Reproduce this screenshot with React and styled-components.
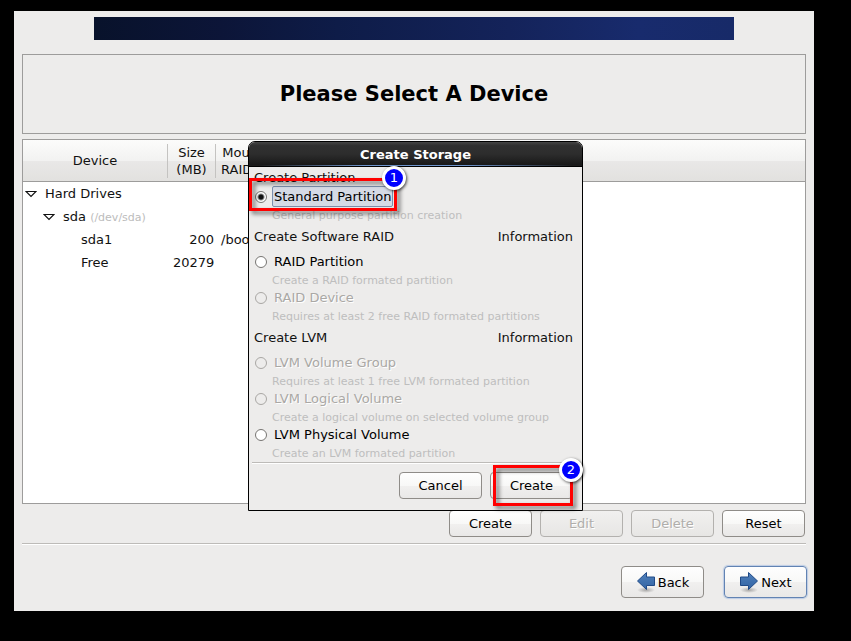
import React, { useState } from 'react';
import styled, { createGlobalStyle, css } from 'styled-components';

const GROUPS = [
  {
    title: 'Create Partition',
    options: [
      {
        id: 'standard',
        label: 'Standard Partition',
        hint: 'General purpose partition creation',
      },
    ],
  },
  {
    title: 'Create Software RAID',
    info: true,
    options: [
      {
        id: 'raid-part',
        label: 'RAID Partition',
        hint: 'Create a RAID formated partition',
      },
      {
        id: 'raid-dev',
        label: 'RAID Device',
        hint: 'Requires at least 2 free RAID formated partitions',
        disabled: true,
      },
    ],
  },
  {
    title: 'Create LVM',
    info: true,
    options: [
      {
        id: 'lvm-group',
        label: 'LVM Volume Group',
        hint: 'Requires at least 1 free LVM formated partition',
        disabled: true,
      },
      {
        id: 'lvm-logical',
        label: 'LVM Logical Volume',
        hint: 'Create a logical volume on selected volume group',
        disabled: true,
      },
      {
        id: 'lvm-physical',
        label: 'LVM Physical Volume',
        hint: 'Create an LVM formated partition',
      },
    ],
  },
];

function Expander() {
  return (
    <svg width="12" height="8" viewBox="0 0 12 8">
      <path d="M1 1.5H11L6 6.5Z" fill="#fff" stroke="#111" strokeWidth="1.2" />
    </svg>
  );
}

function Arrow({ flip }) {
  return (
    <svg width="20" height="22" viewBox="0 0 20 22">
      <defs>
        <linearGradient id="arrowFill" x1="0" y1="0" x2="0" y2="1">
          <stop offset="0" stopColor="#5080bc" />
          <stop offset="0.5" stopColor="#4172af" />
          <stop offset="1" stopColor="#3465a4" />
        </linearGradient>
        <radialGradient id="arrowShade">
          <stop offset="0" stopColor="#000" stopOpacity="0.3" />
          <stop offset="1" stopColor="#000" stopOpacity="0" />
        </radialGradient>
      </defs>
      <ellipse cx="10" cy="19" rx="9" ry="3" fill="url(#arrowShade)" />
      <path
        d="M1.5 6H9.5V1.5L18.5 10L9.5 18.5V14.5H1.5Z"
        transform={flip ? 'translate(20 0) scale(-1 1)' : undefined}
        fill="url(#arrowFill)"
        stroke="#204a87"
      />
    </svg>
  );
}

function DeviceTable() {
  return (
    <Table>
      <colgroup>
        <col width="145" />
        <col width="48" />
        <col />
      </colgroup>
      <thead>
        <tr>
          <HeadCell>
            <HeadLabel $divider>Device</HeadLabel>
          </HeadCell>
          <HeadCell>
            <HeadLabel $divider>
              Size
              <br />
              (MB)
            </HeadLabel>
          </HeadCell>
          <HeadCell>
            <HeadLabel $left>
              Mount Point/
              <br />
              RAID/Volume
            </HeadLabel>
          </HeadCell>
        </tr>
      </thead>
      <tbody>
        <tr>
          <Cell>
            <Node $level={0}>
              <Expander />
              Hard Drives
            </Node>
          </Cell>
          <Cell />
          <Cell />
        </tr>
        <tr>
          <Cell>
            <Node $level={1}>
              <Expander />
              <span>
                sda <Path>(/dev/sda)</Path>
              </span>
            </Node>
          </Cell>
          <Cell />
          <Cell />
        </tr>
        <tr>
          <Cell>
            <Node $level={3}>sda1</Node>
          </Cell>
          <Cell $right>200</Cell>
          <Cell>/boot</Cell>
        </tr>
        <tr>
          <Cell>
            <Node $level={3}>Free</Node>
          </Cell>
          <Cell $right>20279</Cell>
          <Cell />
        </tr>
      </tbody>
    </Table>
  );
}

function StorageDialog() {
  const [selected, setSelected] = useState('standard');
  return (
    <Dialog role="dialog" aria-labelledby="storage-title">
      <TitleBar id="storage-title">Create Storage</TitleBar>
      <Options>
        {GROUPS.map((group, i) => (
          <React.Fragment key={group.title}>
            <GroupHead $first={i === 0}>
              <span>{group.title}</span>
              {group.info && <InfoButton type="button">Information</InfoButton>}
            </GroupHead>
            {group.options.map((option) => (
              <div key={option.id}>
                <OptionRow>
                  <Radio
                    type="radio"
                    name="storage"
                    id={option.id}
                    disabled={option.disabled}
                    checked={selected === option.id}
                    onChange={() => setSelected(option.id)}
                  />
                  <OptionLabel
                    htmlFor={option.id}
                    $active={selected === option.id}
                    $disabled={option.disabled}
                  >
                    {option.label}
                  </OptionLabel>
                </OptionRow>
                <Hint>{option.hint}</Hint>
              </div>
            ))}
          </React.Fragment>
        ))}
      </Options>
      <DialogButtons>
        <Button type="button">Cancel</Button>
        <Button type="button">Create</Button>
      </DialogButtons>
      <Marker $left={0} $top={36} $width={148} $height={33} />
      <Badge $left={133} $top={24}>
        1
      </Badge>
      <Marker $left={244} $top={323} $width={80} $height={41} />
      <Badge $left={310} $top={316}>
        2
      </Badge>
    </Dialog>
  );
}

function App() {
  return (
    <Screen>
      <GlobalStyle />
      <Installer>
        <Banner />
        <Heading>Please Select A Device</Heading>
        <TreeView>
          <DeviceTable />
        </TreeView>
        <Toolbar>
          <Button type="button">Create</Button>
          <Button type="button" disabled>
            Edit
          </Button>
          <Button type="button" disabled>
            Delete
          </Button>
          <Button type="button">Reset</Button>
        </Toolbar>
        <Rule />
        <Footer>
          <NavButton type="button">
            <Arrow flip />
            Back
          </NavButton>
          <NavButton type="button" $primary>
            <Arrow />
            Next
          </NavButton>
        </Footer>
        <StorageDialog />
      </Installer>
    </Screen>
  );
}

const GlobalStyle = createGlobalStyle`
  * {
    box-sizing: border-box;
  }
  body {
    margin: 0;
    background: #000;
    color: #111;
    font-family: 'DejaVu Sans', sans-serif;
    font-size: 13px;
  }
  button {
    font: inherit;
    color: inherit;
  }
`;

const Screen = styled.div`
  display: flex;
  min-height: 100vh;
  padding: 11px 37px 30px 14px;
`;

const Installer = styled.main`
  position: relative;
  flex: 1;
  display: flex;
  flex-direction: column;
  padding: 6px 8px 13px;
  background: #edeceb;
`;

const Banner = styled.div`
  height: 23px;
  margin: 0 72px;
  background: linear-gradient(
    90deg,
    #08122b 0%,
    #0c1538 20%,
    #0e1c48 38%,
    #14235a 65%,
    #182b6d 85%,
    #172a68 100%
  );
`;

const Heading = styled.h1`
  display: flex;
  align-items: center;
  justify-content: center;
  height: 80px;
  margin: 14px 0 5px;
  border: 1px solid #9d9c9b;
  color: #000;
  font-size: 21px;
`;

const TreeView = styled.section`
  flex: 1;
  border: 1px solid #9d9c9b;
  background: #fff;
`;

const Table = styled.table`
  width: 100%;
  table-layout: fixed;
  border-collapse: separate;
  border-spacing: 0;
`;

const HeadCell = styled.th`
  height: 42px;
  padding: 0;
  border-bottom: 1px solid #9d9c9b;
  background: linear-gradient(#fcfcfb, #f2f2f1 50%, #e9e8e7 51%, #e2e1df);
  font-weight: normal;
  line-height: 17px;
`;

const HeadLabel = styled.div`
  display: flex;
  align-items: center;
  justify-content: ${(props) => (props.$left ? 'flex-start' : 'center')};
  height: 34px;
  padding-left: ${(props) => (props.$left ? '5px' : '0')};
  border-right: ${(props) => (props.$divider ? '1px solid #c4c3c1' : 'none')};
`;

const Cell = styled.td`
  height: 23px;
  padding: 0 2px 0 5px;
  line-height: 17px;
  text-align: ${(props) => (props.$right ? 'right' : 'left')};
  white-space: nowrap;
`;

const Node = styled.div`
  display: flex;
  align-items: center;
  gap: 8px;
  margin-left: -3px;
  padding-left: ${(props) => props.$level * 18 + (props.$level > 2 ? 2 : 0)}px;
`;

const Path = styled.small`
  color: #bcbcbc;
  font-size: 11px;
`;

const Toolbar = styled.div`
  display: flex;
  justify-content: flex-end;
  gap: 8px;
  padding: 6px 1px;
`;

const Rule = styled.hr`
  width: 100%;
  height: 2px;
  margin: 0;
  border: 0;
  border-top: 1px solid #bdbbb8;
  background: #fff;
`;

const Footer = styled.footer`
  display: flex;
  justify-content: flex-end;
  gap: 20px;
  margin: 21px -1px 0 0;
`;

const Button = styled.button`
  width: 83px;
  height: 27px;
  padding: 0;
  border: 1px solid #8f8c88;
  border-radius: 4px;
  background: linear-gradient(#fefefe, #f8f8f7 50%, #f1f0ef 51%, #e9e8e7);
  color: #000;

  &:disabled {
    border-color: #b3b1ae;
    background: linear-gradient(#f1f0ef, #e7e6e4);
    color: #b0aeab;
    text-shadow: 1px 1px #fff;
  }
`;

const NavButton = styled(Button)`
  display: flex;
  align-items: center;
  justify-content: center;
  gap: 2px;
  height: 32px;

  ${(props) =>
    props.$primary &&
    css`
      border-color: #6283b3;
      box-shadow: 0 0 1px 1px #bccde5;
    `}
`;

const Dialog = styled.section`
  position: absolute;
  top: 130px;
  left: 234px;
  width: 335px;
  border: 1px solid #000;
  border-radius: 7px 7px 0 0;
  background: #edeceb;
`;

const TitleBar = styled.h2`
  height: 25px;
  margin: 0;
  border-bottom: 1px solid #000;
  border-radius: 6px 6px 0 0;
  background:
    linear-gradient(90deg, #1b1b1b 3%, #6f95cc 35%, #6f95cc 65%, #1b1b1b 97%)
      bottom / 100% 1px no-repeat,
    linear-gradient(#454545, #303030 15%, #2d2d2d 50%, #161616);
  color: #fff;
  font-size: 13px;
  line-height: 25px;
  text-align: center;
`;

const Options = styled.div`
  padding: 0 9px 1px 5px;
`;

const GroupHead = styled.div`
  display: flex;
  justify-content: space-between;
  height: ${(props) => (props.$first ? '20px' : '29px')};
  padding-top: ${(props) => (props.$first ? '0' : '3px')};
  line-height: 22px;
`;

const InfoButton = styled.button`
  height: 22px;
  padding: 0;
  border: 0;
  background: none;
  line-height: 22px;
`;

const OptionRow = styled.div`
  display: flex;
  align-items: center;
  gap: 5px;
  height: 19px;
`;

const Radio = styled.input`
  appearance: none;
  width: 12px;
  height: 12px;
  margin: 0 0 0 1px;
  border: 1px solid #777572;
  border-radius: 50%;
  background: #fff;

  &:checked {
    background: radial-gradient(circle, #111 0 2px, #fff 4px);
  }
  &:disabled {
    border-color: #a9a7a4;
    background: #edeceb;
  }
`;

const OptionLabel = styled.label`
  padding: 0 1px;
  border: 1px solid transparent;
  border-radius: 2px;
  line-height: 19px;
  color: #000;

  ${(props) =>
    props.$active &&
    css`
      border-color: #7c90ae;
      background: #d5dae5;
    `}
  ${(props) =>
    props.$disabled &&
    css`
      color: #aaa8a5;
      text-shadow: 1px 1px #fff;
    `}
`;

const Hint = styled.p`
  height: 17px;
  margin: 0 0 0 18px;
  color: #bebebe;
  font-size: 11px;
  line-height: 19px;
  white-space: nowrap;
`;

const DialogButtons = styled.div`
  display: flex;
  justify-content: flex-end;
  gap: 8px;
  margin: 0 3px;
  padding: 9px 6px 11px;
  border-top: 1px solid #bdbbb8;
  box-shadow: inset 0 1px #fff;
`;

const Marker = styled.div`
  position: absolute;
  top: ${(props) => props.$top}px;
  left: ${(props) => props.$left}px;
  width: ${(props) => props.$width}px;
  height: ${(props) => props.$height}px;
  border: 3px solid #f00;
  filter: drop-shadow(3px 3px 2px rgba(0, 0, 0, 0.55));
  pointer-events: none;
`;

const Badge = styled.span`
  position: absolute;
  top: ${(props) => props.$top}px;
  left: ${(props) => props.$left}px;
  width: 24px;
  height: 24px;
  border: 3px solid #fff;
  border-radius: 50%;
  background: #00f;
  box-shadow: 1px 1px 3px rgba(0, 0, 0, 0.7);
  color: #fff;
  line-height: 18px;
  text-align: center;
`;

export default App;
